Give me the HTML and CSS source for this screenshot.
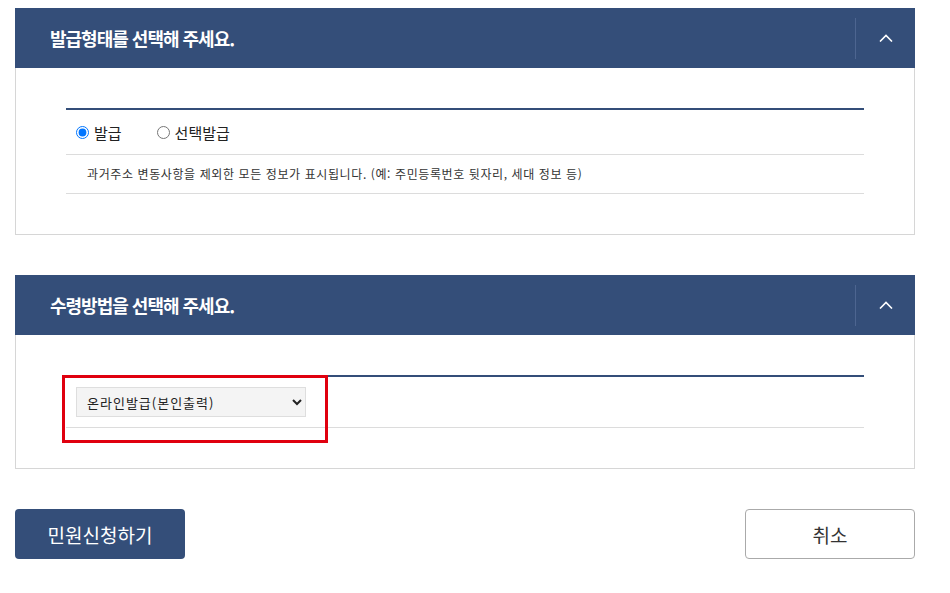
FILE: index.html
```html
<!DOCTYPE html>
<html lang="ko">
<head>
    <meta charset="UTF-8">
    <meta name="viewport" content="width=device-width, initial-scale=1.0">
    <title>민원신청</title>
    <link rel="stylesheet" href="styles.css">
</head>
<body>
    <div class="wrap">
        <div class="section">
            <div class="section-head">
                <h2>발급형태를 선택해 주세요.</h2>
                <button class="toggle" aria-label="접기">
                    <svg width="14" height="8" viewBox="0 0 14 8"><path d="M1 7.5 L7 1.5 L13 7.5" fill="none" stroke="#fff" stroke-width="1.6"/></svg>
                </button>
            </div>
            <div class="section-body">
                <div class="form-table">
                    <div class="row radios">
                        <label><input type="radio" name="type" checked> 발급</label>
                        <label><input type="radio" name="type"> 선택발급</label>
                    </div>
                    <div class="row desc">과거주소 변동사항을 제외한 모든 정보가 표시됩니다. (예: 주민등록번호 뒷자리, 세대 정보 등)</div>
                </div>
            </div>
        </div>

        <div class="section">
            <div class="section-head">
                <h2>수령방법을 선택해 주세요.</h2>
                <button class="toggle" aria-label="접기">
                    <svg width="14" height="8" viewBox="0 0 14 8"><path d="M1 7.5 L7 1.5 L13 7.5" fill="none" stroke="#fff" stroke-width="1.6"/></svg>
                </button>
            </div>
            <div class="section-body">
                <div class="form-table highlight-wrap">
                    <div class="row select-row">
                        <select class="receive">
                            <option>온라인발급(본인출력)</option>
                        </select>
                    </div>
                    <div class="highlight"></div>
                </div>
            </div>
        </div>

        <div class="actions">
            <button class="btn btn-primary">민원신청하기</button>
            <button class="btn btn-cancel">취소</button>
        </div>
    </div>
</body>
</html>
```

FILE: styles.css
```css
body {
    margin: 0;
    font-family: "Noto Sans CJK KR", "Noto Sans", sans-serif;
    color: #333;
    background: #fff;
}
.wrap {
    width: 900px;
    padding: 8px 15px;
}
.section {
    margin-bottom: 40px;
}
.section-head {
    display: flex;
    align-items: center;
    height: 60px;
    background-color: #344e79;
    padding-left: 35px;
}
.section-head h2 {
    flex: 1;
    margin: 0;
    color: #fff;
    font-size: 18px;
    font-weight: 700;
    letter-spacing: -1px;
}
.toggle {
    width: 60px;
    height: 41px;
    border: 0;
    border-left: 1px solid #4d6590;
    background: none;
    padding: 0;
    display: flex;
    align-items: center;
    justify-content: center;
    cursor: pointer;
}
.section-body {
    border: 1px solid #d6d6d6;
    border-top: 0;
    padding: 40px 50px;
}
.form-table {
    border-top: 2px solid #344e79;
}
.row {
    border-bottom: 1px solid #dcdcdc;
}
.radios {
    display: flex;
    gap: 35px;
    height: 44px;
    align-items: center;
    padding-left: 10px;
    font-size: 15px;
    color: #222;
}
.radios label {
    display: flex;
    align-items: center;
    gap: 5px;
}
.radios input {
    margin: 0;
    width: 13px;
    height: 13px;
}
.desc {
    height: 38px;
    line-height: 38px;
    padding-left: 21px;
    font-size: 12px;
    color: #333;
    letter-spacing: 0.6px;
}
.highlight-wrap {
    position: relative;
}
.select-row {
    padding: 10px;
}
.receive {
    width: 230px;
    height: 30px;
    background: #f4f4f4;
    border: 1px solid #dedede;
    font-family: inherit;
    font-size: 13px;
    letter-spacing: 1px;
    color: #222;
    padding: 0 6px;
    display: block;
}
.highlight {
    position: absolute;
    left: -4px;
    top: -2px;
    width: 260px;
    height: 62px;
    border: 3px solid #e0000f;
    pointer-events: none;
}
.actions {
    display: flex;
    justify-content: space-between;
}
.btn {
    width: 170px;
    height: 50px;
    font-family: inherit;
    font-size: 19px;
    border-radius: 4px;
    cursor: pointer;
}
.btn-primary {
    background: #344e79;
    color: #fff;
    border: 0;
}
.btn-cancel {
    background: #fff;
    color: #333;
    border: 1px solid #aaa;
}
```
